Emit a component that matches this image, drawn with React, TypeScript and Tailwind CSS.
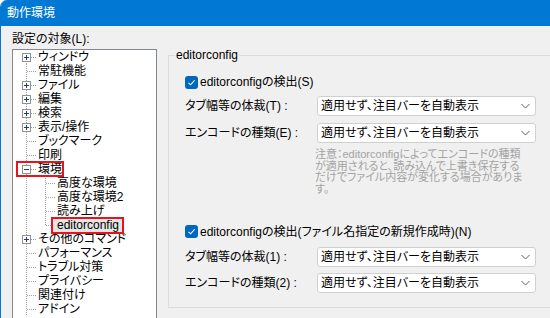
import React from "react";

type RowDef = {
  t: string;
  e?: "+" | "-";
  l?: number;
  last?: boolean;
  sel?: boolean;
  red?: boolean;
};

const rows: RowDef[] = [
  { t: "ウィンドウ", e: "+" },
  { t: "常駐機能" },
  { t: "ファイル", e: "+" },
  { t: "編集", e: "+" },
  { t: "検索", e: "+" },
  { t: "表示/操作", e: "+" },
  { t: "ブックマーク" },
  { t: "印刷" },
  { t: "環境", e: "-", red: true },
  { t: "高度な環境", l: 1 },
  { t: "高度な環境2", l: 1 },
  { t: "読み上げ", l: 1 },
  { t: "editorconfig", l: 1, last: true, sel: true },
  { t: "その他のコマンド", e: "+" },
  { t: "パフォーマンス" },
  { t: "トラブル対策" },
  { t: "プライバシー" },
  { t: "関連付け" },
  { t: "アドイン" },
];

const DOT = "#a0a0a0";

function TreeRow({ r, first }: { r: RowDef; first: boolean }) {
  const lvl = r.l ?? 0;
  const w = lvl ? 44 : 25;
  return (
    <div className="relative flex h-[14px] items-center">
      <svg width={w} height={14} className="shrink-0" shapeRendering="crispEdges">
        <line x1={13.5} y1={first ? 7 : 0} x2={13.5} y2={14} stroke={DOT} strokeDasharray="1 1" />
        {lvl === 0 && (
          <line x1={r.e ? 18 : 14} y1={7.5} x2={24} y2={7.5} stroke={DOT} strokeDasharray="1 1" />
        )}
        {lvl === 0 && r.e && (
          <g>
            <rect x={9.5} y={3.5} width={8} height={8} fill="#fff" stroke="#919191" />
            <line x1={11} y1={7.5} x2={16} y2={7.5} stroke="#1e3f7e" />
            {r.e === "+" && <line x1={13.5} y1={5} x2={13.5} y2={10} stroke="#1e3f7e" />}
          </g>
        )}
        {lvl === 1 && (
          <g>
            <line x1={32.5} y1={0} x2={32.5} y2={r.last ? 8 : 14} stroke={DOT} strokeDasharray="1 1" />
            <line x1={33} y1={7.5} x2={43} y2={7.5} stroke={DOT} strokeDasharray="1 1" />
          </g>
        )}
      </svg>
      {r.sel ? (
        <span className="relative z-10 -ml-[4px] h-[13px] whitespace-nowrap bg-[#e5e5e5] pl-[4px] pr-[3px] text-[12px] leading-[13px] text-black outline-2 outline-[#e8141b]">
          {r.t}
        </span>
      ) : (
        <span className="whitespace-nowrap text-[12px] leading-[14px] text-black">{r.t}</span>
      )}
      {r.red && (
        <div className="pointer-events-none absolute left-[3px] top-[-1px] z-10 h-[16px] w-[48px] border-2 border-[#e8141b]" />
      )}
    </div>
  );
}

function Checkbox() {
  return (
    <div className="flex h-[13px] w-[13px] shrink-0 items-center justify-center rounded-[3px] bg-[#0067c0]">
      <svg width="9" height="9" viewBox="0 0 9 9">
        <polyline points="1.5,4.8 3.6,6.8 7.6,2.4" fill="none" stroke="#fff" strokeWidth="1.1" />
      </svg>
    </div>
  );
}

function Select({ value }: { value: string }) {
  return (
    <div className="flex h-[20px] w-[219px] shrink-0 items-center justify-between rounded-[3px] border border-[#d0d0d0] bg-white pl-[3px] pr-[5px]">
      <span className="whitespace-nowrap text-[12px] leading-[14px] text-black">{value}</span>
      <svg width="9" height="6" viewBox="0 0 9 6">
        <polyline points="0.5,1 4.5,5 8.5,1" fill="none" stroke="#5f5f5f" strokeWidth="1" />
      </svg>
    </div>
  );
}

function FieldRow({ label, value, className = "" }: { label: string; value: string; className?: string }) {
  return (
    <div className={"flex items-center " + className}>
      <div className="w-[132px] shrink-0 whitespace-nowrap text-[12px] leading-[14px] text-black">{label}</div>
      <Select value={value} />
    </div>
  );
}

export default function App() {
  const v = "適用せず、注目バーを自動表示";
  return (
    <div className="h-[318px] w-[550px] overflow-hidden rounded-tl-[7px] border-l border-[#0078d4] bg-[#f0f0f0] font-['Liberation_Sans','Noto_Sans_CJK_JP',sans-serif] [font-feature-settings:'palt']">
      <div className="flex h-[26px] items-center bg-[#0078d4] pl-[6px] text-[12px] text-white">動作環境</div>
      <div className="flex">
        <div className="flex w-[156px] shrink-0 flex-col pl-[11px]">
          <div className="mt-[6px] whitespace-nowrap text-[12px] leading-[14px] text-black">設定の対象(L):</div>
          <div className="mt-[3px] h-[280px] w-[145px] overflow-hidden border border-[#828790] bg-white">
            {rows.map((r, i) => (
              <TreeRow key={i} r={r} first={i === 0} />
            ))}
          </div>
        </div>
        <fieldset className="ml-[11px] mt-[22px] h-[260px] w-[420px] shrink-0 border border-[#dcdcdc]">
          <legend className="ml-[6px] px-[1px] text-[12px] leading-[14px] text-black">editorconfig</legend>
          <div className="flex flex-col pl-[16px]">
            <div className="mt-[13px] flex h-[14px] items-center">
              <Checkbox />
              <span className="ml-[2px] whitespace-nowrap text-[12px] leading-[14px] text-black">editorconfigの検出(S)</span>
            </div>
            <FieldRow className="mt-[7px]" label="タブ幅等の体裁(T) :" value={v} />
            <FieldRow className="mt-[7px]" label="エンコードの種類(E) :" value={v} />
            <div className="ml-[130px] mt-[6px] whitespace-nowrap text-[11px] leading-[11.7px] text-[#a3a3a3]">
              <div>注意：editorconfigによってエンコードの種類</div>
              <div>が適用されると、読み込んで上書き保存する</div>
              <div>だけでファイル内容が変化する場合がありま</div>
              <div>す。</div>
            </div>
            <div className="mt-[29px] flex h-[14px] items-center">
              <Checkbox />
              <span className="ml-[2px] whitespace-nowrap text-[12px] leading-[14px] text-black">
                editorconfigの検出(ファイル名指定の新規作成時)(N)
              </span>
            </div>
            <FieldRow className="mt-[8px]" label="タブ幅等の体裁(1) :" value={v} />
            <FieldRow className="mt-[6px]" label="エンコードの種類(2) :" value={v} />
          </div>
        </fieldset>
      </div>
    </div>
  );
}
